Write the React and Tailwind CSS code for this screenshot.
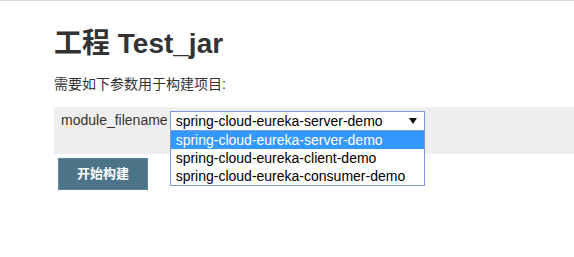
import React from 'react'

const options = [
  'spring-cloud-eureka-server-demo',
  'spring-cloud-eureka-client-demo',
  'spring-cloud-eureka-consumer-demo',
]

const App = () => {
  return (
    <div
      className="min-h-[257px] bg-white border-t border-[#d9d9d9] pl-[54px] pt-[29px] text-[#333]"
      style={{ fontFamily: '"Liberation Sans", "Noto Sans CJK SC", Arial, sans-serif' }}
    >
      {/* Title */}
      <h1 className="text-[28px] leading-[28px] font-bold text-[#333]">工程 Test_jar</h1>
      <p className="mt-[16px] text-[14px] leading-[20px]">需要如下参数用于构建项目:</p>

      {/* Parameter row */}
      <div className="mt-[13px] h-[47px] bg-[#efefef] flex items-start pl-[7px] pt-[3px]">
        <span className="text-[14px] leading-[20px] text-[#333]">module_filename</span>
        <div className="relative ml-[2px] mt-[1px] w-[255px]">
          <div className="h-[20px] border border-[#7a9cd8] bg-white pl-[5px] pr-[6px] flex items-center justify-between">
            <span className="text-[14px] leading-[18px] text-black">{options[0]}</span>
            <svg width="8" height="6" viewBox="0 0 8 6" className="mr-[1px]">
              <path d="M0 0 H8 L4 6 Z" fill="#111" />
            </svg>
          </div>
          {/* Open dropdown list */}
          <ul className="absolute left-0 top-full w-[255px] border border-[#7a9cd8] border-t-0 bg-white">
            {options.map((opt, i) => (
              <li
                key={opt}
                className={`h-[18px] pl-[5px] text-[14px] leading-[18px] ${
                  i === 0 ? 'bg-[#3399ff] text-white' : 'text-black'
                }`}
              >
                {opt}
              </li>
            ))}
          </ul>
        </div>
      </div>

      {/* Build button */}
      <button className="mt-[4px] ml-[4px] w-[90px] h-[32px] bg-[#4b7489] border border-[#5b879c] text-white text-[13px] font-bold">
        开始构建
      </button>
    </div>
  )
}

export default App
